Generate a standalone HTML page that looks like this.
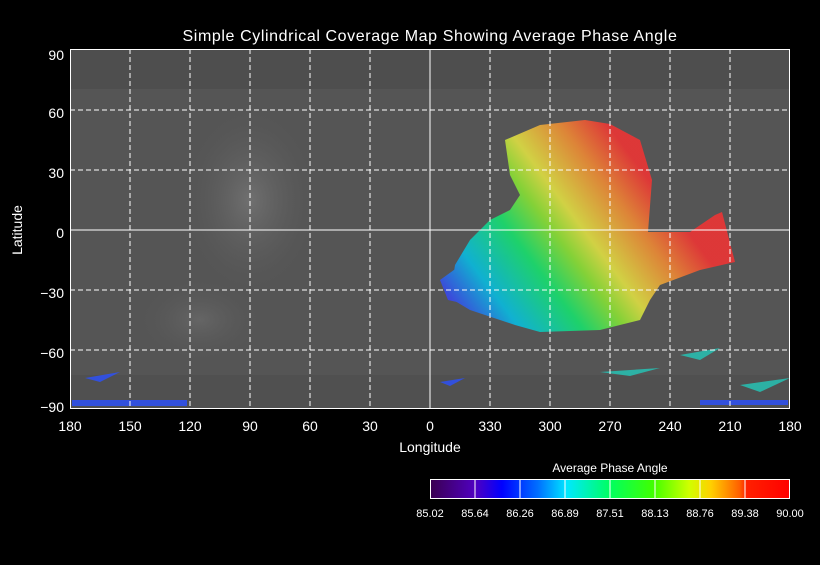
<!DOCTYPE html>
<html><head><style>
html,body{margin:0;padding:0;background:#000;}
body{width:820px;height:560px;overflow:hidden;font-family:"Liberation Sans",sans-serif;}
</style></head><body>
<svg width="820" height="560" viewBox="0 0 820 560" xmlns="http://www.w3.org/2000/svg" font-family="Liberation Sans, sans-serif" fill="#fff">
<defs>
<linearGradient id="pg" gradientUnits="userSpaceOnUse" x1="450" y1="310" x2="650" y2="160">
<stop offset="0" stop-color="#4030ff"/>
<stop offset="0.18" stop-color="#00c8f0"/>
<stop offset="0.38" stop-color="#10f070"/>
<stop offset="0.52" stop-color="#90f030"/>
<stop offset="0.62" stop-color="#f0f040"/>
<stop offset="0.8" stop-color="#ff9030"/>
<stop offset="0.95" stop-color="#ff3030"/>
</linearGradient>
<linearGradient id="cb" x1="0" x2="1" y1="0" y2="0">
<stop offset="0" stop-color="#3a0050"/>
<stop offset="0.125" stop-color="#5000c0"/>
<stop offset="0.2" stop-color="#0000ff"/>
<stop offset="0.3" stop-color="#0070ff"/>
<stop offset="0.38" stop-color="#00e8ff"/>
<stop offset="0.5" stop-color="#00ff60"/>
<stop offset="0.62" stop-color="#40ff00"/>
<stop offset="0.72" stop-color="#d0ff00"/>
<stop offset="0.78" stop-color="#ffd000"/>
<stop offset="0.86" stop-color="#ff6000"/>
<stop offset="0.88" stop-color="#ff2000"/>
<stop offset="1" stop-color="#ff0000"/>
</linearGradient>
<radialGradient id="lt" cx="0.5" cy="0.5" r="0.5"><stop offset="0" stop-color="#707070"/><stop offset="1" stop-color="#5a5a5a" stop-opacity="0"/></radialGradient>
</defs>
<text x="430" y="41" font-size="16" text-anchor="middle" letter-spacing="0.6">Simple Cylindrical Coverage Map Showing Average Phase Angle</text>
<rect x="70" y="49" width="720" height="360" fill="#555"/>
<rect x="70" y="49" width="720" height="40" fill="#4e4e4e"/>
<rect x="70" y="375" width="720" height="34" fill="#505050"/>
<ellipse cx="250" cy="200" rx="65" ry="90" fill="url(#lt)"/>
<ellipse cx="200" cy="320" rx="60" ry="40" fill="url(#lt)" opacity="0.6"/>
<g fill="url(#pg)" opacity="0.8">
<path d="M505,140 L540,125 L585,120 L610,124 L640,140 L652,180 L648,232 L690,232 L715,215 L722,212 L735,262 L700,270 L660,285 L650,300 L640,320 L600,330 L540,332 L515,325 L500,320 L470,310 L450,298 L455,265 L470,240 L490,220 L510,210 L520,195 L510,175 Z"/>
<path d="M440,280 L465,262 L470,305 L448,300 Z"/>
</g>
<g fill="#2a50ff" opacity="0.8">
<rect x="72" y="400" width="115" height="6"/>
<rect x="700" y="400" width="88" height="5"/>
<path d="M85,378 L120,372 L100,382 Z"/>
<path d="M440,382 L465,378 L450,386 Z"/>
</g>
<g fill="#20d0c0" opacity="0.75">
<path d="M740,385 L790,378 L760,392 Z"/>
<path d="M600,372 L660,368 L630,376 Z"/>
<path d="M680,355 L720,348 L700,360 Z"/>
</g>
<g stroke="#fff" stroke-width="1" fill="none">
<g stroke-dasharray="5,3">
<path d="M130,49V409M190,49V409M250,49V409M310,49V409M370,49V409M490,49V409M550,49V409M610,49V409M670,49V409M730,49V409"/>
<path d="M70,110H790M70,170H790M70,290H790M70,350H790"/>
</g>
<path d="M430,49V409M70,230H790"/>
<rect x="70.5" y="49.5" width="719" height="359"/>
</g>
<g font-size="14" text-anchor="end">
<text x="64" y="60">90</text><text x="64" y="118">60</text><text x="64" y="178">30</text><text x="64" y="238">0</text>
<text x="64" y="298">−30</text><text x="64" y="358">−60</text><text x="64" y="412">−90</text>
</g>
<g font-size="14" text-anchor="middle">
<text x="70" y="431">180</text><text x="130" y="431">150</text><text x="190" y="431">120</text><text x="250" y="431">90</text>
<text x="310" y="431">60</text><text x="370" y="431">30</text><text x="430" y="431">0</text><text x="490" y="431">330</text>
<text x="550" y="431">300</text><text x="610" y="431">270</text><text x="670" y="431">240</text><text x="730" y="431">210</text><text x="790" y="431">180</text>
<text x="430" y="452">Longitude</text>
</g>
<text transform="translate(22,230) rotate(-90)" font-size="14" text-anchor="middle">Latitude</text>
<text x="610" y="472" font-size="12" text-anchor="middle">Average Phase Angle</text>
<rect x="430" y="479" width="360" height="20" fill="url(#cb)"/>
<g stroke="#fff" fill="none"><rect x="430.5" y="479.5" width="359" height="19"/>
<path d="M475,479V499M520,479V499M565,479V499M610,479V499M655,479V499M700,479V499M745,479V499"/></g>
<g font-size="11" text-anchor="middle">
<text x="430" y="517">85.02</text><text x="475" y="517">85.64</text><text x="520" y="517">86.26</text><text x="565" y="517">86.89</text>
<text x="610" y="517">87.51</text><text x="655" y="517">88.13</text><text x="700" y="517">88.76</text><text x="745" y="517">89.38</text><text x="790" y="517">90.00</text>
</g>
</svg>
</body></html>
